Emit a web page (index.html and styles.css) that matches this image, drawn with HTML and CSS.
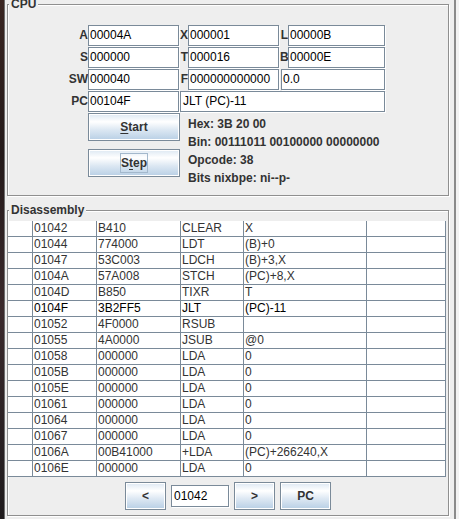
FILE: index.html
```html
<!DOCTYPE html>
<html>
<head>
<meta charset="utf-8">
<title>CPU</title>
<link rel="stylesheet" href="styles.css">
</head>
<body>
<div class="screen">
  <div class="desk"></div>
  <div class="frame">
    <fieldset class="group cpu">
      <legend>CPU</legend>
      <div class="regs">
        <span class="rl">A</span><div class="tf">00004A</div>
        <span class="rl">X</span><div class="tf">000001</div>
        <span class="rl">L</span><div class="tf wide">00000B</div>

        <span class="rl">S</span><div class="tf">000000</div>
        <span class="rl">T</span><div class="tf">000016</div>
        <span class="rl">B</span><div class="tf wide">00000E</div>

        <span class="rl">SW</span><div class="tf">000040</div>
        <span class="rl">F</span><div class="tf">000000000000</div>
        <div class="tf float">0.0</div>

        <span class="rl">PC</span><div class="tf">00104F</div>
        <div class="tf instr">JLT (PC)-11</div>
      </div>
      <div class="ctrl">
        <div class="btns">
          <button class="btn big"><u>S</u>tart</button>
          <button class="btn big"><span class="focus">S<u>t</u>ep</span></button>
        </div>
        <div class="info">
          <div>Hex: 3B 20 00</div>
          <div>Bin: 00111011 00100000 00000000</div>
          <div>Opcode: 38</div>
          <div>Bits nixbpe: ni--p-</div>
        </div>
      </div>
    </fieldset>

    <fieldset class="group dis">
      <legend>Disassembly</legend>
      <div class="table">
        <div class="row"><div></div><div>01042</div><div>B410</div><div>CLEAR</div><div>X</div><div></div></div>
        <div class="row"><div></div><div>01044</div><div>774000</div><div>LDT</div><div>(B)+0</div><div></div></div>
        <div class="row"><div></div><div>01047</div><div>53C003</div><div>LDCH</div><div>(B)+3,X</div><div></div></div>
        <div class="row"><div></div><div>0104A</div><div>57A008</div><div>STCH</div><div>(PC)+8,X</div><div></div></div>
        <div class="row"><div></div><div>0104D</div><div>B850</div><div>TIXR</div><div>T</div><div></div></div>
        <div class="row current"><div></div><div>0104F</div><div>3B2FF5</div><div>JLT</div><div>(PC)-11</div><div></div></div>
        <div class="row"><div></div><div>01052</div><div>4F0000</div><div>RSUB</div><div></div><div></div></div>
        <div class="row"><div></div><div>01055</div><div>4A0000</div><div>JSUB</div><div>@0</div><div></div></div>
        <div class="row"><div></div><div>01058</div><div>000000</div><div>LDA</div><div>0</div><div></div></div>
        <div class="row"><div></div><div>0105B</div><div>000000</div><div>LDA</div><div>0</div><div></div></div>
        <div class="row"><div></div><div>0105E</div><div>000000</div><div>LDA</div><div>0</div><div></div></div>
        <div class="row"><div></div><div>01061</div><div>000000</div><div>LDA</div><div>0</div><div></div></div>
        <div class="row"><div></div><div>01064</div><div>000000</div><div>LDA</div><div>0</div><div></div></div>
        <div class="row"><div></div><div>01067</div><div>000000</div><div>LDA</div><div>0</div><div></div></div>
        <div class="row"><div></div><div>0106A</div><div>00B41000</div><div>+LDA</div><div>(PC)+266240,X</div><div></div></div>
        <div class="row"><div></div><div>0106E</div><div>000000</div><div>LDA</div><div>0</div><div></div></div>
      </div>
      <div class="nav">
        <button class="btn nb">&lt;</button>
        <div class="tf addr">01042</div>
        <button class="btn nb">&gt;</button>
        <button class="btn nb pc">PC</button>
      </div>
    </fieldset>
  </div>
  <div class="outside"></div>
</div>
</body>
</html>
```

FILE: styles.css
```css
html, body {
  margin: 0;
  padding: 0;
  background: #eeeeee;
}

body {
  width: 459px;
  height: 519px;
  overflow: hidden;
  font-family: "Liberation Sans", Arial, sans-serif;
  font-size: 12px;
  color: #333333;
}

.screen {
  display: flex;
  height: 519px;
}

.desk {
  width: 4px;
  flex: none;
  background: linear-gradient(to bottom, #3a2622 0%, #241a1a 30%, #3b2a2c 60%, #1f1b1d 100%);
}

.frame {
  width: 452px;
  flex: none;
  box-sizing: border-box;
  border-left: 1px solid #6f6f6f;
  border-right: 2px solid #8a8a8a;
  background: #eeeeee;
}

.outside {
  flex: 1;
  background: #f2f2f2;
}

/* titled etched group */
.group {
  box-sizing: border-box;
  width: 442px;
  margin: 0 0 0 2px;
  padding: 0;
  border: 1px solid #8f8f8f;
  box-shadow: 1px 1px 0 #ffffff, inset 1px 1px 0 #ffffff;
  min-width: 0;
}

.group legend {
  font-weight: bold;
  font-size: 12px;
  line-height: 14px;
  padding: 0 2px;
  margin-left: 1px;
  background: #eeeeee;
  color: #333333;
}

.cpu {
  margin-top: -3px;
  padding-bottom: 8px;
}

.regs {
  display: grid;
  grid-template-columns: 80px 92px 8px 92px 8px 98px;
  grid-auto-rows: 22px;
  margin-top: 14px;
}

.rl {
  font-weight: bold;
  text-align: right;
  line-height: 21px;
  white-space: nowrap;
}

.tf {
  box-sizing: border-box;
  width: 91px;
  height: 21px;
  border: 1px solid #7a8a99;
  background: #ffffff;
  box-shadow: 1px 1px 0 #ffffff;
  padding-left: 1px;
  line-height: 19px;
  color: #000000;
  white-space: nowrap;
  overflow: hidden;
}

.tf.wide {
  width: 97px;
}

.tf.float {
  grid-column: 5 / 7;
  margin-left: 1px;
  width: 104px;
}

.tf.instr {
  grid-column: 3 / 7;
  width: 205px;
  padding-left: 2px;
}

.ctrl {
  display: flex;
  padding-left: 80px;
}

.btns {
  display: flex;
  flex-direction: column;
  gap: 8px;
  width: 92px;
}

.btn {
  box-sizing: border-box;
  margin: 0;
  padding: 0;
  border: 1px solid #7a8a99;
  box-shadow: inset 0 0 0 1px #ffffff;
  background: linear-gradient(to bottom, #dde8f3 0%, #ffffff 30%, #dde8f3 60%, #b8cfe5 100%);
  font-family: "Liberation Sans", Arial, sans-serif;
  font-weight: bold;
  font-size: 12px;
  color: #333333;
  display: flex;
  align-items: center;
  justify-content: center;
}

.btn u {
  text-decoration-thickness: 1px;
  text-underline-offset: 2px;
}

.big {
  width: 92px;
  height: 28px;
}

.focus {
  display: inline-block;
  line-height: 16px;
  padding: 1px 0;
  border: 1px solid #a3b8cc;
}

.info {
  margin-left: 8px;
  margin-top: 2px;
  font-weight: bold;
  line-height: 18px;
  white-space: nowrap;
}

.dis {
  margin-top: 7px;
  padding-bottom: 5px;
}

.table {
  margin-top: 4px;
  width: 438px;
  background: #ffffff;
}

.row {
  display: grid;
  grid-template-columns: 25px 64px 84px 63px 123px 79px;
  height: 16px;
}

.row > div {
  box-sizing: border-box;
  border-right: 1px solid #7a8a99;
  border-bottom: 1px solid #7a8a99;
  line-height: 15px;
  padding-left: 1px;
  white-space: nowrap;
  overflow: hidden;
  color: #333333;
}

.row.current > div {
  color: #000000;
}

.nav {
  display: flex;
  justify-content: center;
  align-items: center;
  gap: 5px;
  margin-top: 5px;
  height: 28px;
}

.nb {
  width: 41px;
  height: 28px;
}

.nb.pc {
  width: 51px;
}

.tf.addr {
  width: 58px;
  height: 22px;
  line-height: 20px;
  padding-left: 2px;
}
```
